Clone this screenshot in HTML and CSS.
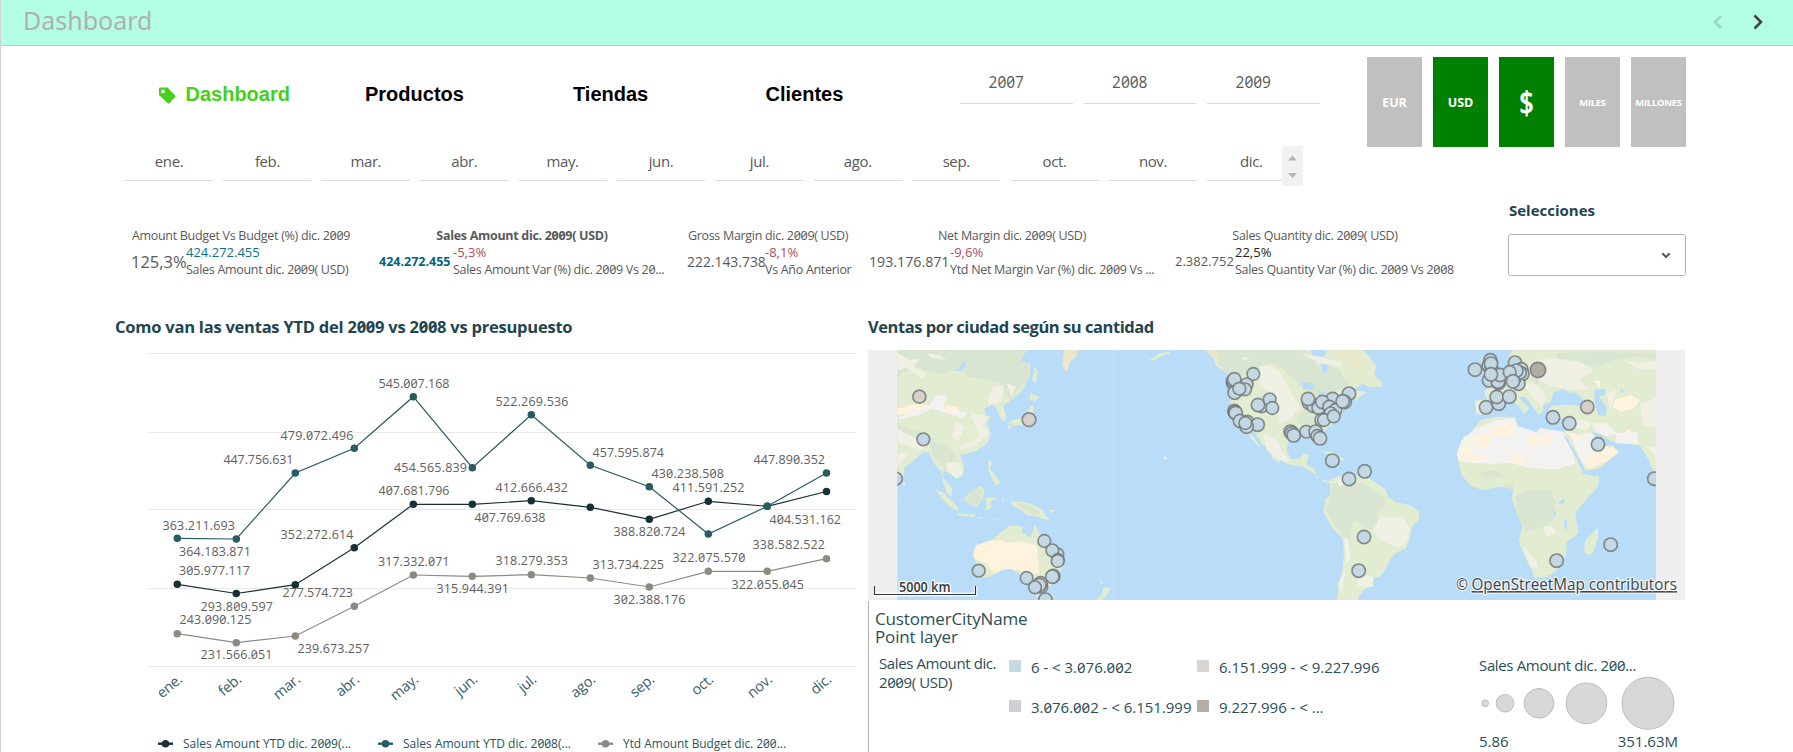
FILE: index.html
```html
<!DOCTYPE html>
<html lang="es">
<head>
<meta charset="utf-8">
<title>Dashboard</title>
<link rel="stylesheet" href="styles.css">
</head>
<body>
<header class="bar">
  <h1 class="bar-title">Dashboard</h1>
  <div class="pager">
    <svg class="prev" width="12" height="16" viewBox="0 0 12 16"><path d="M9 2 3 8 9 14"/></svg>
    <svg class="next" width="12" height="16" viewBox="0 0 12 16"><path d="M2.500 1.500 9 8 2.500 14.500"/></svg>
  </div>
</header>
<section class="filters">
  <div class="filters-main">
    <div class="filters-row">
      <nav class="nav">
        <a class="nav-item active"><svg width="17" height="17" viewBox="0 0 17 17"><path fill-rule="evenodd" d="M0 1.500Q0 .5 1 .5H8.500L16 8.300Q17 9.300 16 10.300L10.500 16Q9.500 17 8.500 16L0 8ZM4 2.500A1.900 1.900 0 1 0 4 6.300 1.900 1.900 0 1 0 4 2.500Z"/></svg>Dashboard</a>
        <a class="nav-item">Productos</a>
        <a class="nav-item">Tiendas</a>
        <a class="nav-item">Clientes</a>
      </nav>
      <div class="years"><span>2007</span><span>2008</span><span>2009</span></div>
    </div>
    <div class="months">
      <div class="month-list"><span>ene.</span><span>feb.</span><span>mar.</span><span>abr.</span><span>may.</span><span>jun.</span><span>jul.</span><span>ago.</span><span>sep.</span><span>oct.</span><span>nov.</span><span>dic.</span></div>
      <div class="scroller"><svg width="21" height="40" viewBox="0 0 21 40"><path d="M6 14.500 10.500 9.500 15 14.500ZM6 27 10.500 32 15 27Z"/></svg></div>
    </div>
  </div>
  <div class="units">
    <button class="unit">EUR</button>
    <button class="unit on">USD</button>
    <button class="unit on big">$</button>
    <button class="unit small">MILES</button>
    <button class="unit small">MILLONES</button>
  </div>
</section>
<section class="summary">
  <div class="kpi k1"><div class="kpi-title">Amount Budget Vs Budget (%) dic. 2009</div><div class="kpi-row"><b class="kpi-value">125,3%</b><div class="kpi-side"><i class="teal">424.272.455</i><span>Sales Amount dic. 2009( USD)</span></div></div></div>
  <div class="kpi k2"><div class="kpi-title">Sales Amount dic. 2009( USD)</div><div class="kpi-row"><b class="kpi-value">424.272.455</b><div class="kpi-side"><i class="red">-5,3%</i><span>Sales Amount Var (%) dic. 2009 Vs 20...</span></div></div></div>
  <div class="kpi k3"><div class="kpi-title">Gross Margin dic. 2009( USD)</div><div class="kpi-row"><b class="kpi-value">222.143.738</b><div class="kpi-side"><i class="red">-8,1%</i><span>Vs Año Anterior</span></div></div></div>
  <div class="kpi k4"><div class="kpi-title">Net Margin dic. 2009( USD)</div><div class="kpi-row"><b class="kpi-value">193.176.871</b><div class="kpi-side"><i class="red">-9,6%</i><span>Ytd Net Margin Var (%) dic. 2009 Vs ...</span></div></div></div>
  <div class="kpi k5"><div class="kpi-title">Sales Quantity dic. 2009( USD)</div><div class="kpi-row"><b class="kpi-value">2.382.752</b><div class="kpi-side"><i class="black">22,5%</i><span>Sales Quantity Var (%) dic. 2009 Vs 2008</span></div></div></div>
  <div class="selection">
    <div class="selection-title">Selecciones</div>
    <div class="select"><svg width="10" height="7" viewBox="0 0 10 7"><path d="M1.300 1.300 5 5 8.700 1.300"/></svg></div>
  </div>
</section>
<main class="panels">
  <section class="trend">
    <h2 class="panel-title">Como van las ventas YTD del 2009 vs 2008 vs presupuesto</h2>
    <svg class="chart" width="868" height="402" viewBox="0 350 868 402">
      <g class="grid"><path d="M147.500 353.500H856M147.500 432.500H856M147.500 509.500H856M147.500 588.500H856M147.500 666.500H856"/></g>
      <g class="s-budget"><polyline points="177.300,633.700 236.300,642.700 295.300,636 354.300,606.300 413.300,575 472.300,576.300 531.300,574.700 590.300,578 649.300,587 708.300,571.300 767.300,571.300 826.500,558.700"/>
        <path class="dots" d="M177.300 633.700h0M236.300 642.700h0M295.300 636h0M354.300 606.300h0M413.300 575h0M472.300 576.300h0M531.300 574.700h0M590.300 578h0M649.300 587h0M708.300 571.300h0M767.300 571.300h0M826.500 558.700h0"/></g>
      <g class="s-2009"><polyline points="177.300,584.300 236.300,593.500 295.300,584.700 354.300,547.700 413.300,504.300 472.300,504.300 531.300,500.700 590.300,507.300 649.300,519.300 708.300,501.300 767.300,506.300 826.500,491.500"/>
        <path class="dots" d="M177.300 584.300h0M236.300 593.500h0M295.300 584.700h0M354.300 547.700h0M413.300 504.300h0M472.300 504.300h0M531.300 500.700h0M590.300 507.300h0M649.300 519.300h0M708.300 501.300h0M767.300 506.300h0M826.500 491.500h0"/></g>
      <g class="s-2008"><polyline points="177.300,538.300 236.300,539 295.300,473 354.300,448.300 413.300,396.700 472.300,467.700 531.300,414.700 590.300,465.300 649.300,486.700 708.300,534 767.300,506.300 826.500,473"/>
        <path class="dots" d="M177.300 538.300h0M236.300 539h0M295.300 473h0M354.300 448.300h0M413.300 396.700h0M472.300 467.700h0M531.300 414.700h0M590.300 465.300h0M649.300 486.700h0M708.300 534h0M767.300 506.300h0M826.500 473h0"/></g>
      <g class="values">
        <text x="162.500" y="530" textLength="72.500">363.211.693</text>
        <text x="179" y="556" textLength="72">364.183.871</text>
        <text x="179" y="575" textLength="71">305.977.117</text>
        <text x="200.500" y="611" textLength="72.500">293.809.597</text>
        <text x="179.500" y="624" textLength="72">243.090.125</text>
        <text x="200.500" y="659" textLength="72">231.566.051</text>
        <text x="223.500" y="464" textLength="70">447.756.631</text>
        <text x="280.500" y="440" textLength="73">479.072.496</text>
        <text x="280.500" y="539" textLength="73">352.272.614</text>
        <text x="282.500" y="597" textLength="70.500">277.574.723</text>
        <text x="297.500" y="653" textLength="72">239.673.257</text>
        <text x="378.500" y="388" textLength="71">545.007.168</text>
        <text x="394" y="472" textLength="73">454.565.839</text>
        <text x="378.500" y="495" textLength="71">407.681.796</text>
        <text x="378" y="566" textLength="71.500">317.332.071</text>
        <text x="474.500" y="522" textLength="71">407.769.638</text>
        <text x="436.500" y="593" textLength="72.500">315.944.391</text>
        <text x="495.500" y="406" textLength="73">522.269.536</text>
        <text x="495.500" y="492" textLength="72.500">412.666.432</text>
        <text x="495.500" y="565" textLength="72.500">318.279.353</text>
        <text x="592.500" y="457" textLength="71.500">457.595.874</text>
        <text x="592.500" y="569" textLength="71.500">313.734.225</text>
        <text x="651.500" y="478" textLength="72.500">430.238.508</text>
        <text x="613.500" y="536" textLength="72">388.820.724</text>
        <text x="613.500" y="604" textLength="72">302.388.176</text>
        <text x="672.500" y="492" textLength="72">411.591.252</text>
        <text x="672.500" y="562" textLength="73">322.075.570</text>
        <text x="731.500" y="589" textLength="72.500">322.055.045</text>
        <text x="753.500" y="464" textLength="71.500">447.890.352</text>
        <text x="769.500" y="524" textLength="71.500">404.531.162</text>
        <text x="752.500" y="549" textLength="72.500">338.582.522</text>
      </g>
      <g class="axis">
        <text transform="translate(183.300 681) rotate(-40)">ene.</text><text transform="translate(242.300 681) rotate(-40)">feb.</text><text transform="translate(301.300 681) rotate(-40)">mar.</text><text transform="translate(360.300 681) rotate(-40)">abr.</text><text transform="translate(419.300 681) rotate(-40)">may.</text><text transform="translate(478.300 681) rotate(-40)">jun.</text><text transform="translate(537.300 681) rotate(-40)">jul.</text><text transform="translate(596.300 681) rotate(-40)">ago.</text><text transform="translate(655.300 681) rotate(-40)">sep.</text><text transform="translate(714.300 681) rotate(-40)">oct.</text><text transform="translate(773.300 681) rotate(-40)">nov.</text><text transform="translate(832.300 681) rotate(-40)">dic.</text>
      </g>
      <g class="legend">
        <g class="s-2009"><path class="tick" d="M158 743.700h15"/><path class="dots" d="M165.500 743.700h0"/></g><text x="183" y="748" textLength="168" lengthAdjust="spacingAndGlyphs">Sales Amount YTD dic. 2009(...</text>
        <g class="s-2008"><path class="tick" d="M378 743.700h15"/><path class="dots" d="M385.500 743.700h0"/></g><text x="403" y="748" textLength="168" lengthAdjust="spacingAndGlyphs">Sales Amount YTD dic. 2008(...</text>
        <g class="s-budget"><path class="tick" d="M598 743.700h15"/><path class="dots" d="M605.500 743.700h0"/></g><text x="623" y="748" textLength="163" lengthAdjust="spacingAndGlyphs">Ytd Amount Budget dic. 200...</text>
      </g>
    </svg>
  </section>
  <section class="places">
    <h2 class="panel-title places-title">Ventas por ciudad según su cantidad</h2>
    <svg class="map" width="817" height="250" viewBox="868 350 817 250">
      <defs><clipPath id="world"><rect x="897.300" y="350" width="758.700" height="250"/></clipPath></defs>
      <rect class="void" x="868" y="350" width="817" height="250"/>
      <g clip-path="url(#world)">
        <rect class="sea" x="897" y="350" width="760" height="250"/>
        <path class="graticule" d="M897 499.300H1656M1113.500 350V600M1493.300 350V600"/>
        <!-- Asia and Oceania -->
        <g transform="translate(860 340) scale(.33333)">
          <path class="land" d="M100 20H508L480 62 512 74 506 112 488 150 450 184 430 196 440 238 428 244 412 212 400 196 374 208 380 224 394 232 380 248 392 280 384 308 350 332 318 342 300 344 312 380 308 406 292 418 272 402 250 390 248 410 262 428 276 446 276 470 262 460 250 430 244 392 222 372 206 336 188 338 160 362 134 382 130 410 122 424 100 390Z"/>
          <path class="wood" d="M112 30H500L480 62 508 80 500 120 450 180 420 130 320 108 300 80 250 104 160 80 112 110ZM206 300 260 316 290 350 260 392 242 372 218 346ZM112 252 150 268 200 280 220 300 190 300 112 290Z"/>
          <path class="pale" d="M400 140 430 136 426 184 384 200 386 172ZM112 40 150 60 180 56 160 80 200 100 190 118 140 84 112 90ZM112 268 160 290 200 320 180 330 112 308ZM330 220 384 230 370 260 388 280 340 320 300 330 300 318 360 290ZM290 240 312 262 296 306 276 290ZM256 366 300 370 310 400 290 414 262 396ZM440 130 468 140 454 170ZM200 40 240 46 260 60 216 54ZM112 340 146 340 128 366 112 376Z"/>
          <path class="snow" d="M112 234 160 212 210 196 226 166 262 168 250 196 300 214 322 218 310 236 250 216 214 206 180 224 120 238Z"/>
          <path class="sand" d="M112 206 176 190 214 198 160 214 112 226ZM256 196 292 200 296 222 262 212Z"/>
          <path class="sea" d="M282 92 302 80 312 56 318 72 306 94ZM372 206 396 194 412 206 394 220 380 226Z"/>
          <path class="land" d="M520 76 534 96 526 132 516 118 524 98ZM512 160 540 172 524 184 508 180ZM512 196 522 200 518 224 506 256 460 256 440 250 462 238 494 234ZM440 256 456 258 448 268ZM384 362 396 364 390 388 408 408 422 428 408 438 398 420 386 392ZM384 318 390 326 388 332ZM224 448 250 458 294 502 296 516 270 500 240 468ZM288 520 346 524 344 532 296 526ZM312 472 350 444 362 438 374 450 368 478 350 500 330 494 316 484ZM378 472 412 474 388 486 396 500 380 514ZM450 484 480 484 520 494 548 510 560 530 572 542 540 534 520 528 500 526 480 508 460 498ZM566 510 588 510 572 518ZM126 422 138 432 132 440ZM356 530 376 534 358 536ZM408 538 418 536 410 544ZM428 466 432 480 428 490Z"/>
          <path class="wood" d="M312 472 350 444 368 450 362 484 344 498 324 490ZM464 490 500 492 544 520 520 526 490 510Z"/>
          <path class="land" d="M340 640 346 616 390 602 420 580 446 558 470 556 490 562 484 576 510 592 520 572 524 552 540 584 552 600 576 614 600 634 614 660 604 690 584 724 560 752 530 752 504 734 474 698 450 686 430 690 390 710 364 712 344 704 350 680 340 650Z"/>
          <path class="sand" d="M340 640 350 616 390 602 424 600 440 608 480 604 530 616 534 668 538 700 500 698 476 690 450 686 424 690 400 700 380 672 344 656Z"/>
          <path class="land" d="M524 766 556 760 580 766 566 790 546 796 538 778ZM714 716 730 728 726 734ZM728 744 750 742 744 762 724 782H706L728 760ZM868 60 900 40 930 34 932 38 906 48 876 64ZM1038 30H1260V370L1240 358 1228 336 1200 300 1180 270 1168 276 1204 322 1184 306 1160 278 1140 262 1112 216 1110 160 1118 130 1098 98 1066 76 1060 46Z"/>
          <path class="steppe" d="M612 30H652L650 50 630 66 620 98 606 74Z"/>
          <path class="wood" d="M1060 30H1260V90L1230 80 1190 100 1150 104 1130 120 1098 98 1072 70Z"/>
          <path class="pale" d="M1150 50 1172 56 1144 60ZM1190 90 1230 80 1260 90V150L1236 130 1200 116ZM1224 210 1260 220V290L1236 280 1226 250ZM1220 300 1260 340V356L1240 350ZM1174 288 1200 320 1190 314Z"/>
          <path class="steppe" d="M1038 30H1060L1078 50 1070 66Z"/>
          <circle class="snow" cx="916" cy="353" r="4.500"/>
        </g>
        <!-- Americas, Europe and Africa -->
        <g transform="translate(1270 340) scale(.33333)">
          <path class="land" d="M-30 30H120L130 50 150 66 156 96 170 98 176 68 160 56 172 30H280L300 50 320 80 312 100 336 138 300 142 276 132 250 150 290 156 262 176 236 184 216 216 200 240 190 250 156 276 160 310 154 320 140 292 110 286 90 290 56 300 50 330 62 358 90 356 98 340 118 344 110 366 112 376 134 388 140 410 156 418 176 424 190 414 230 402 260 408 290 410 320 430 346 448 354 470 376 486 420 496 448 514 446 538 426 562 418 600 406 626 376 640 360 660 346 690 330 710 306 714 312 738 284 748 266 770 262 785H200L206 740 216 700 222 640 218 596 184 560 160 516 166 480 182 460 180 430 160 424 132 400 100 380 50 372 10 346-12 322-30 306Z"/>
          <path class="wood" d="M-30 30H110L130 56 156 100 170 98 176 74 210 90 220 110 240 130 190 160 150 170 90 140 40 86 0 66-30 80ZM116 190 160 196 170 220 140 250 80 252 90 220ZM180 470 190 430 250 420 300 440 340 470 346 500 320 520 330 560 300 570 250 540 240 596 220 590 186 548 170 510Z"/>
          <path class="pale" d="M-30 80 0 76 30 96 70 170 90 200 60 240 30 250 20 190-10 150-30 140ZM-20 280 20 300 40 340 60 364 30 360-10 330ZM330 530 400 530 420 560 412 604 386 624 330 600 310 570ZM270 702 312 712 306 740 262 738ZM90 40 150 50 220 70 210 80 150 70ZM204 730 220 700 230 650 226 700 212 760ZM200 420 220 410 230 430 210 440Z"/>
          <path class="snow" d="M222 590 234 600 242 650 230 670Z"/>
          <path class="steppe" d="M186 30H276V76L250 90 230 60 200 50Z"/>
          <path class="sea" d="M96 126 130 130 134 150 100 150ZM146 150 176 162 170 180 148 170Z"/>
          <path class="land" d="M148 332 190 336 206 350 180 344ZM206 352 226 356 214 364ZM298 112 332 120 338 140 304 138ZM632 42 640 60 640 116 656 128 690 112 700 96 720 80 710 58 730 30H1170V402L1158 410 1136 360 1110 316 1040 310 1020 302 996 286 966 276 980 296 1004 318 1028 316 1046 336 1020 360 990 384 946 394 930 360 902 312 880 284 890 262 900 240 888 234 856 236 830 230 836 206 852 196 896 194 942 198 936 176 900 156 884 152 850 156 844 186 820 194 820 214 806 226 784 194 766 170 746 170 760 188 778 204 764 222 744 196 716 176 690 180 672 196 656 226 618 222 614 180 650 178 642 152 664 138 690 122 650 116ZM600 92 622 80 626 104 600 108ZM630 240 680 230 736 230 742 258 780 270 800 278 810 264 880 276 904 314 924 366 940 402 988 410 984 440 944 484 916 520 926 580 890 606 888 646 862 690 830 712 794 714 780 680 760 640 746 600 756 560 726 480 730 446 690 440 640 450 606 440 576 408 566 372 560 342 574 300 600 284Z"/>
          <path class="snow" d="M612 268 680 240 734 236 742 258 780 270 800 278 810 264 880 276 904 314 916 370 860 388 780 384 720 368 660 372 570 366 560 342 574 304ZM902 290 960 276 980 296 1004 318 1020 322 990 350 950 370 940 376ZM966 250 1010 250 1040 280 1010 290 976 274ZM1036 280 1100 276 1106 312 1040 310Z"/>
          <path class="sand" d="M572 330 590 308 614 344 640 350 650 366 570 360ZM606 290 650 280 666 296 650 320 620 322ZM660 270 700 254 730 250 726 284 696 284 660 290ZM730 340 770 350 760 372 726 368ZM780 280 800 290 810 320 780 318ZM806 290 830 278 846 300 830 322ZM950 350 1004 330 1030 320 1046 338 1010 362 960 386 944 380ZM1034 180 1080 164 1110 180 1090 206 1050 216 1028 200ZM972 124 990 122 990 146ZM880 272 940 290 920 300ZM580 290 600 290 584 310ZM1066 270 1084 270 1080 290Z"/>
          <path class="pale" d="M804 60 860 54 930 66 970 90 930 120 960 150 900 150 850 140 800 120ZM760 130 800 130 830 170 816 200 790 176ZM622 184 650 190 640 222 620 216ZM670 160 700 150 690 176ZM1010 160 1040 150 1020 210ZM1060 60 1120 70 1166 60V84L1110 90ZM1110 190 1166 170V260L1120 260ZM880 240 930 236 966 250 950 270 900 264ZM1130 320 1166 320V360ZM760 620 800 664 806 690 780 680ZM820 560 850 560 860 580 830 590Z"/>
          <path class="wood" d="M860 40 1000 36 1166 40V56L1100 50 1030 60 980 84 920 60 860 56ZM736 470 780 446 840 450 856 480 850 540 820 560 770 574 750 550ZM700 440 730 430 730 450ZM950 598 970 590 966 620 950 640ZM630 400 680 390 700 410 650 420ZM780 110 810 120 800 136Z"/>
          <path class="sea" d="M844 186 850 160 880 146 890 164 914 156 942 180 936 192 896 186 860 192ZM972 150 1006 146 1004 166 986 170 1010 200 1006 228 984 226 976 196ZM1050 146 1064 152 1054 160ZM872 480 886 478 880 492 866 492ZM850 512 858 512 854 540ZM882 540 892 540 890 572 884 564ZM880 286 890 290 924 354 942 378 936 384 914 346Z"/>
          <path class="land" d="M984 562 984 590 970 636 956 646 942 636 946 600Z"/>
        </g>
        <g class="pins">
          <g transform="translate(860 340) scale(.33333)">
            <circle class="c3" cx="178" cy="170" r="19.500"/><circle class="c3" cx="507" cy="239" r="20.500"/><circle cx="190" cy="298" r="19"/><circle cx="108" cy="416" r="19"/>
            <circle cx="356" cy="692" r="19"/><circle cx="553" cy="603" r="19"/><circle cx="592" cy="643" r="19"/><circle cx="577" cy="631" r="19"/><circle cx="594" cy="660" r="19"/><circle cx="593" cy="663" r="19"/>
            <circle cx="580" cy="708" r="20"/><circle cx="577" cy="710" r="20"/><circle cx="500" cy="714" r="19"/><circle cx="544" cy="740" r="19"/><circle cx="542" cy="730" r="20"/><circle cx="538" cy="735" r="20"/><circle cx="525" cy="742" r="19"/><circle cx="556" cy="779" r="20"/>
            <circle cx="1180" cy="102" r="19"/><circle cx="1119" cy="128" r="20"/><circle cx="1120" cy="122" r="20"/><circle cx="1160" cy="133" r="19"/><circle cx="1155" cy="148" r="19"/><circle cx="1124" cy="158" r="20"/><circle cx="1123" cy="118" r="20"/><circle cx="1138" cy="146" r="19"/>
            <circle cx="1205" cy="200" r="18"/><circle cx="1194" cy="195" r="20"/><circle cx="1229" cy="178" r="19"/><circle cx="1237" cy="204" r="19"/>
            <circle cx="1123" cy="213" r="20"/><circle cx="1125" cy="217" r="20"/><circle cx="1127" cy="219" r="20"/><circle cx="1140" cy="243" r="20"/><circle cx="1162" cy="246" r="20"/><circle cx="1193" cy="254" r="20"/><circle cx="1160" cy="260" r="20"/><circle cx="1156" cy="249" r="19"/>
          </g>
          <g transform="translate(1270 340) scale(.33333)">
            <circle cx="117" cy="188" r="20"/><circle cx="130" cy="197" r="20"/><circle cx="146" cy="203" r="20"/><circle cx="114" cy="177" r="20"/><circle cx="188" cy="177" r="20"/><circle cx="157" cy="186" r="20"/><circle cx="178" cy="200" r="19"/><circle cx="196" cy="210" r="19"/><circle cx="237" cy="161" r="20"/><circle cx="224" cy="186" r="20"/><circle cx="218" cy="184" r="20"/><circle cx="182" cy="220" r="19"/><circle cx="154" cy="240" r="19"/><circle cx="162" cy="240" r="19"/><circle cx="191" cy="229" r="19"/>
            <circle cx="62" cy="275" r="20"/><circle cx="66" cy="280" r="20"/><circle cx="71" cy="286" r="20"/><circle cx="109" cy="275" r="19"/><circle cx="137" cy="275" r="20"/><circle cx="142" cy="288" r="19"/><circle cx="150" cy="295" r="20"/>
            <circle cx="187" cy="362" r="20"/><circle cx="237" cy="417" r="20"/><circle cx="284" cy="394" r="20"/><circle cx="282" cy="591" r="20"/><circle cx="266" cy="692" r="20"/>
            <circle cx="615" cy="89" r="20"/><circle cx="661" cy="61" r="20"/><circle cx="656" cy="78" r="20"/><circle cx="665" cy="90" r="20"/><circle cx="657" cy="121" r="20"/><circle cx="686" cy="129" r="20"/><circle cx="684" cy="125" r="20"/><circle cx="690" cy="105" r="20"/><circle cx="663" cy="71" r="20"/><circle cx="663" cy="103" r="20"/>
            <circle cx="735" cy="68" r="20"/><circle cx="754" cy="88" r="20"/><circle cx="757" cy="102" r="20"/><circle cx="745" cy="131" r="20"/><circle cx="733" cy="114" r="20"/><circle cx="750" cy="98" r="19"/><circle cx="739" cy="92" r="20"/><circle cx="719" cy="96" r="19"/><circle cx="729" cy="124" r="20"/>
            <circle cx="648" cy="202" r="20"/><circle cx="686" cy="191" r="20"/><circle cx="680" cy="171" r="20"/><circle cx="718" cy="170" r="20"/><circle class="c4" cx="804" cy="90" r="23"/><circle class="c3" cx="952" cy="201" r="20"/>
            <circle cx="849" cy="232" r="20"/><circle cx="898" cy="250" r="20"/><circle cx="984" cy="313" r="20"/><circle cx="1153" cy="416" r="20"/><circle cx="1022" cy="614" r="20"/><circle cx="860" cy="662" r="20"/>
          </g>
        </g>
      </g>
      <path class="scale-halo" d="M874.500 586V594.500H975.500V586"/><path class="scale" d="M874.500 586V594.500H975.500V586"/>
      <text class="scale-text" x="899" y="592" textLength="51.500" lengthAdjust="spacingAndGlyphs">5000 km</text>
      <text class="credit" x="1456" y="590" textLength="12" lengthAdjust="spacingAndGlyphs">©</text>
      <text class="credit underline" x="1471.500" y="590" textLength="205.500" lengthAdjust="spacingAndGlyphs">OpenStreetMap contributors</text>
    </svg>
    <div class="map-legend">
      <div class="layer">CustomerCityName<br>Point layer</div>
      <div class="legend-body">
        <div class="measure">Sales Amount dic.<br>2009( USD)</div>
        <div class="ranges">
          <span class="range r1">6 - &lt; 3.076.002</span><span class="range r3">6.151.999 - &lt; 9.227.996</span>
          <span class="range r2">3.076.002 - &lt; 6.151.999</span><span class="range r4">9.227.996 - &lt; ...</span>
        </div>
        <div class="sizes">
          <div>Sales Amount dic. 200...</div>
          <svg width="200" height="56" viewBox="1479 675 200 56"><circle cx="1485.200" cy="703.300" r="3.300"/><circle cx="1505" cy="703.300" r="8.800"/><circle cx="1539" cy="703.300" r="14.800"/><circle cx="1586.500" cy="703.300" r="20.300"/><circle cx="1648" cy="703.300" r="26"/></svg>
          <div class="size-ends"><span>5.86</span><span>351.63M</span></div>
        </div>
      </div>
    </div>
  </section>
</main>
</body>
</html>
```
FILE: styles.css
```css
* { box-sizing: border-box; }
html, body { margin: 0; height: 752px; overflow: hidden; background: #fff; }
body { font-family: "Open Sans", "Noto Sans", sans-serif; font-feature-settings: "zero"; font-size: 13px; color: #595959; border-left: 1px solid #d2d2d2; width: 1793px; }
h1, h2 { margin: 0; }
b, i { font-style: normal; font-weight: 400; }

.bar { height: 46px; padding: 0 29px 0 22px; display: flex; justify-content: space-between; align-items: flex-start; background: #b3ffe6; border-bottom: 1px solid #9fddc9; }
.bar-title { font-family: "Noto Sans", sans-serif; font-size: 25px; font-weight: 400; color: #afb1b0; line-height: 41px; }
.pager { display: flex; gap: 28px; padding-top: 14px; }
.pager svg { fill: none; stroke: #404040; stroke-width: 2.500; }
.pager .prev { stroke: #9cd3c2; }

.filters { display: flex; height: 146px; padding-left: 124px; }
.filters-main { width: 1242px; }
.filters-row { display: flex; height: 100px; padding-left: 33.500px; }
.nav { display: grid; grid-template-columns: 206.500px 208px 192.500px 194px; padding-top: 36px; }
.nav-item { display: flex; gap: 10px; height: 24px; align-items: center; font-family: "Liberation Sans", Arial, sans-serif; font-size: 20px; font-weight: 700; color: #000; }
.nav-item.active { color: #44d219; }
.nav-item svg { fill: #44d219; position: relative; top: 1px; }
.years { display: flex; gap: 10px; }
.years span { width: 113.500px; height: 58px; padding: 25px 20px 0 0; line-height: 22px; text-align: center; font-size: 15.500px; border-bottom: 1px solid #dcdcdc; }
.months { display: flex; width: 1178px; height: 40px; }
.month-list { display: flex; gap: 10.300px; width: 1157px; overflow: hidden; }
.month-list span { flex: none; width: 88.100px; height: 35px; padding-top: 4px; text-align: center; line-height: 22px; font-size: 15px; letter-spacing: -.4px; border-bottom: 1px solid #dcdcdc; }
.scroller { background: #f1f1f1; }
.scroller svg { display: block; fill: #b5b5b5; }

.units { display: flex; gap: 11px; padding-top: 11px; }
.unit { width: 55px; height: 90px; padding: 0; border: 0; background: #c0c0c0; color: #fff; font: 700 12.500px "Open Sans", sans-serif; white-space: nowrap; }
.unit.on { background: #008000; }
.unit.big { font-size: 32px; font-stretch: 80%; }
.unit.small { font-size: 9.500px; letter-spacing: -.3px; }

.summary { display: flex; height: 113px; padding-left: 130px; }
.kpi { flex: none; padding-top: 35px; line-height: 17px; white-space: nowrap; }
.kpi-title { display: flex; justify-content: center; }
.kpi-row { display: flex; align-items: center; }
.kpi-side { display: flex; flex-direction: column; }
.kpi-title, .kpi-side span { font-size: 12.500px; letter-spacing: -.3px; }
.k1 { width: 248px; padding-right: 28px; } .k1 .kpi-value { width: 55px; font-size: 16.500px; }
.k2 { width: 308px; padding-right: 22px; } .k2 .kpi-title { font-weight: 700; } .k2 .kpi-value { flex: none; width: 74px; font-size: 12.500px; font-weight: 700; color: #006580; }
.k3 { width: 182px; padding-right: 20px; } .k3 .kpi-value { flex: none; width: 78px; font-size: 13.900px; }
.k4 { width: 306px; padding: 35px 20px 0 0; } .k4 .kpi-value { flex: none; width: 81px; font-size: 14.200px; }
.k5 { width: 333px; padding-right: 53px; } .k5 .kpi-value { width: 60px; }
.teal { color: #10708a; } .red { color: #b04d57; } .black { color: #222; }
.selection { width: 178px; padding-top: 7px; }
.selection-title { height: 35px; padding-left: 1px; line-height: 23px; font-size: 15px; font-weight: 700; color: #1f4550; }
.select { height: 42px; border: 1px solid #b3b3b3; border-radius: 3px; display: flex; justify-content: flex-end; align-items: center; padding-right: 14px; }
.select svg { fill: none; stroke: #595959; stroke-width: 2; }

.panels { display: flex; }
.trend { width: 867px; }
.trend .chart { margin-left: -1px; }
.trend .panel-title { padding-left: 114px; }
.panel-title { height: 45px; line-height: 44px; font-size: 16.500px; font-weight: 700; color: #1f4550; white-space: nowrap; letter-spacing: -.23px; }
.places-title { letter-spacing: -.46px; }
.chart, .map { display: block; }
.chart polyline, .chart path { fill: none; }
.grid path { stroke: #e9e9e9; stroke-width: 1.200; }
.chart polyline { stroke-width: 1.200; }
.s-2009 { stroke: #182f38; } .s-2008 { stroke: #275d62; } .s-budget { stroke: #8c8a82; }
.dots { stroke-width: 7.500; stroke-linecap: round; }
.tick { stroke-width: 2.400; }
.values text { font-size: 12.500px; fill: #606060; }
.axis text { font-size: 14.500px; letter-spacing: -.3px; fill: #39606a; text-anchor: end; }
.legend text { font-size: 13px; fill: #2b525c; }

.void { fill: #efefef; } .sea { fill: #b9dcf8; } .land { fill: #e1ecd0; } .wood { fill: #d9e5d0; } .pale { fill: #f0f0e4; } .snow { fill: #f4f2f1; } .sand { fill: #fff3dd; } .steppe { fill: #e9e8ca; }
.graticule { fill: none; stroke: #c3e1f8; stroke-width: 1; }
.pins circle { fill: #c3d8e2; stroke: #707476; stroke-opacity: .8; stroke-width: 5; }
.pins .c3 { fill: #d5d0cc; } .pins .c4 { fill: #b2aca7; }
.scale-halo { fill: none; stroke: #fff; stroke-width: 3.500; } .scale { fill: none; stroke: #333; stroke-width: 1.200; }
.scale-text { font-family: "Noto Sans", sans-serif; font-feature-settings: normal; font-size: 14px; font-weight: 600; fill: #444; stroke: #fff; stroke-width: 2.500; paint-order: stroke; }
.credit { font-size: 16px; fill: #444; stroke: #fff; stroke-opacity: .7; stroke-width: 2.500; paint-order: stroke; }
.underline { text-decoration: underline; }

.map-legend { margin-top: 1px; height: 151px; border-left: 1px solid #b3b3b3; color: #2b4e58; overflow: hidden; }
.layer { padding: 9px 0 0 6px; font-size: 17px; line-height: 18px; letter-spacing: -.15px; }
.legend-body { display: flex; padding: 7px 0 0 10px; font-size: 15px; white-space: nowrap; }
.measure { width: 130px; line-height: 19px; padding-top: 1px; letter-spacing: -.4px; }
.ranges { display: grid; grid-template: 40px 40px / 188px 188px; width: 470px; }
.range { display: flex; align-items: flex-start; gap: 10px; line-height: 22px; padding-top: 3px; letter-spacing: -.02px; }
.range::before { content: ""; width: 12px; height: 12px; margin-top: 4px; background: #c5d9e2; }
.r2::before { background: #cfd0d4; } .r3::before { background: #d8d4cf; } .r4::before { background: #b4aea6; }
.sizes { width: 199px; line-height: 20px; padding-top: 2px; letter-spacing: -.35px; }
.sizes svg { display: block; fill: #d8d8d8; stroke: #bcbcbc; }
.size-ends { display: flex; justify-content: space-between; letter-spacing: 0; }
```
